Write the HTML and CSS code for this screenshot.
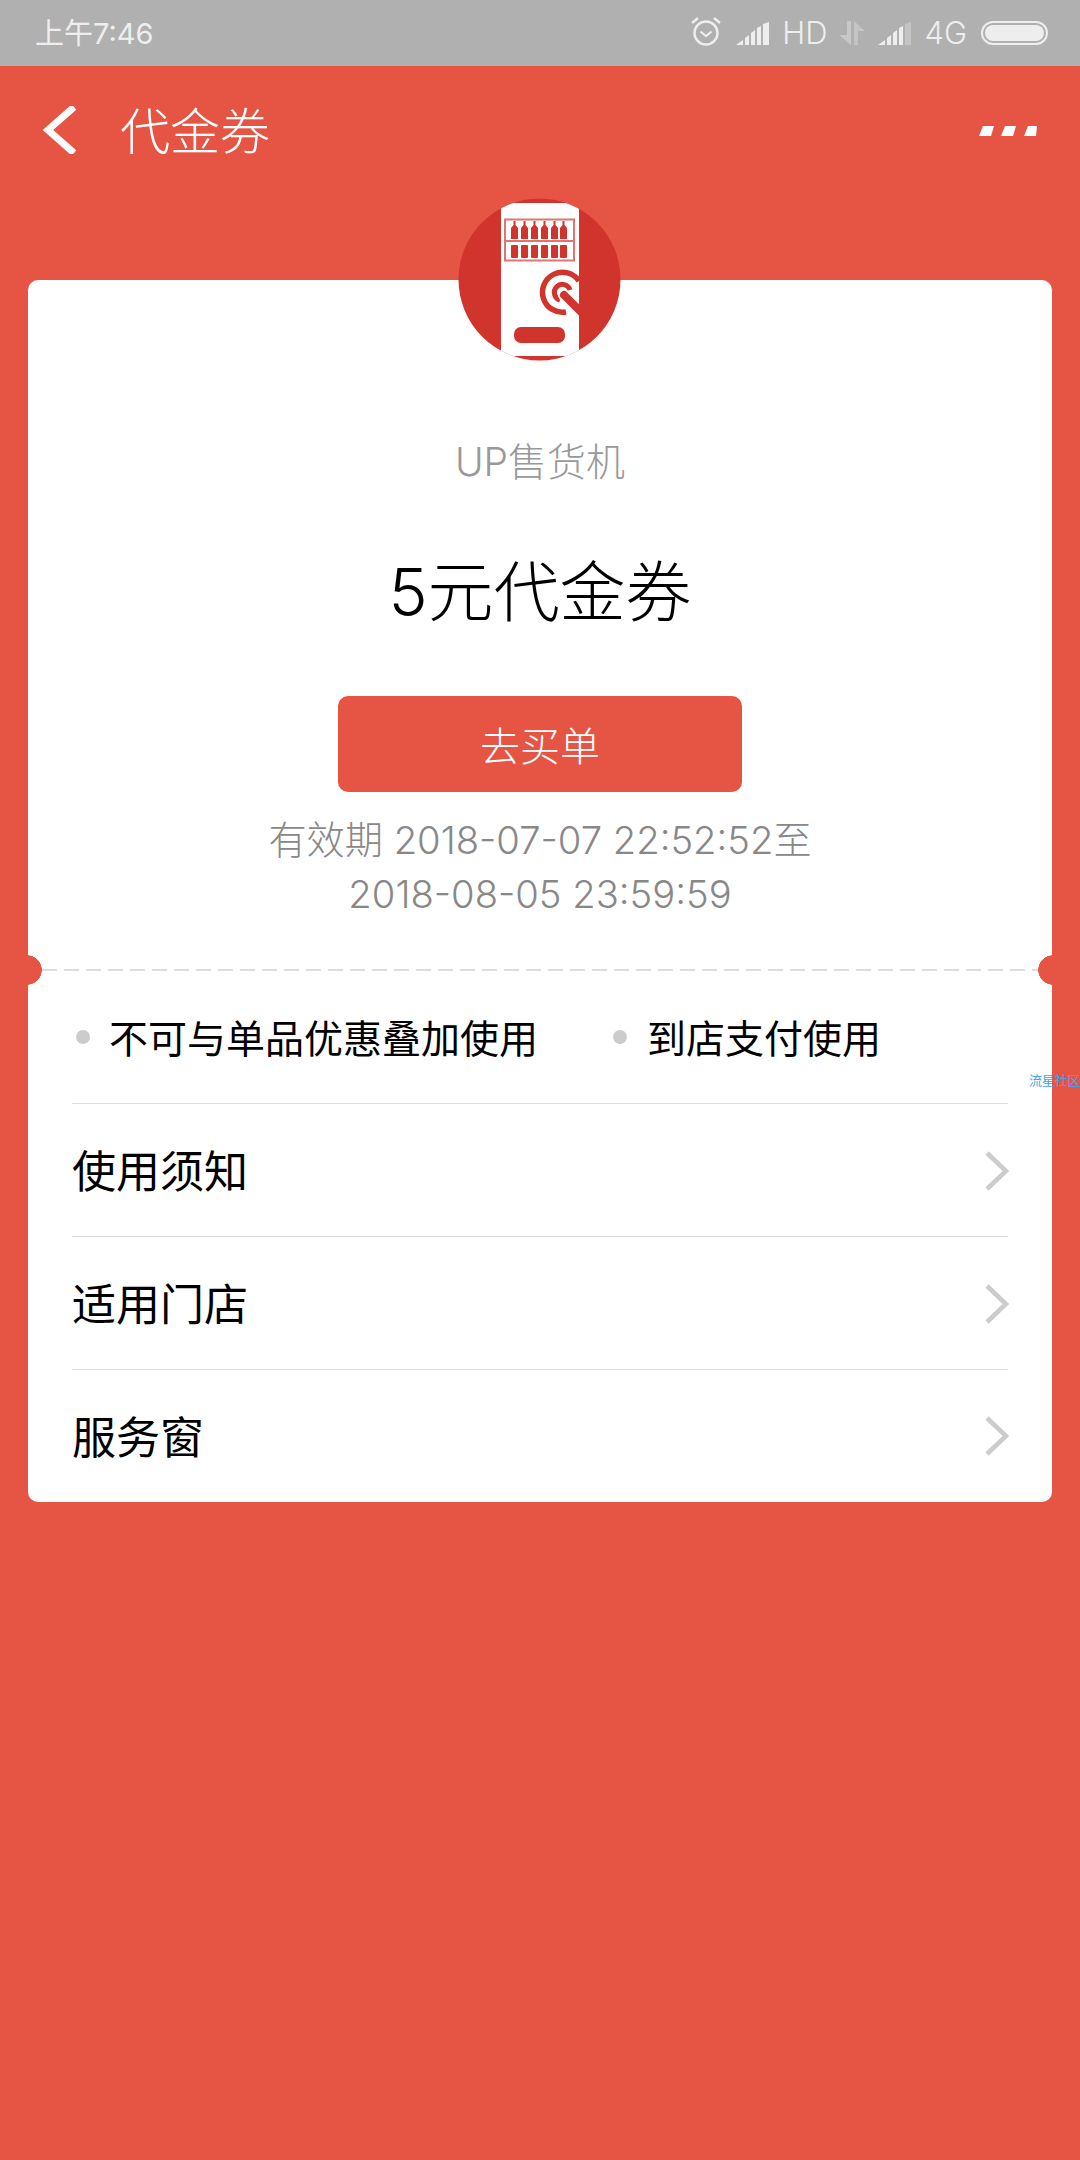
FILE: index.html
```html
<!DOCTYPE html>
<html lang="zh-CN">
<head>
  <meta charset="UTF-8" />
  <meta name="viewport" content="width=device-width, initial-scale=1.0" />
  <title>代金券</title>
  <link rel="stylesheet" href="styles.css">
</head>
<body>

  <div class="statusbar">
    <span class="time">上午7:46</span>
    <div class="status-icons">
      <svg class="ic-alarm" width="30" height="30" viewBox="0 0 30 30">
        <circle cx="15" cy="17" r="11.5" fill="none" stroke="#eee" stroke-width="2.4"/>
        <path d="M9.5 15.5l5.5 4.5 5.5-4.5" fill="none" stroke="#eee" stroke-width="2.2"/>
        <path d="M1 7l6-5M29 7l-6-5" fill="none" stroke="#eee" stroke-width="2.4"/>
      </svg>
      <svg class="ic-signal" width="34" height="23" viewBox="0 0 34 23">
        <path d="M0 23l7-5v5zM9 16l4-3v10H9zM15 11l4-3v15h-4zM21 6l4-2v19h-4zM27 2l6-2v23h-6z" fill="#eee"/>
      </svg>
      <span class="net net-hd">HD</span>
      <svg class="ic-data" width="26" height="24" viewBox="0 0 26 24">
        <path d="M8 0h4v24L0 14h8z" fill="#c8c8c8"/>
        <path d="M15 24h4V10h7L15 0z" fill="#c4c4c4"/>
      </svg>
      <svg class="ic-signal2" width="34" height="23" viewBox="0 0 34 23">
        <path d="M0 23l7-5v5zM9 16l4-3v10H9zM15 11l4-3v15h-4zM21 6l4-2v19h-4z" fill="#eee"/>
        <path d="M27 2l6-2v23h-6z" fill="#c4c4c4"/>
      </svg>
      <span class="net net-4g">4G</span>
      <div class="battery"><div class="battery-fill"></div></div>
    </div>
  </div>

  <div class="header">
    <svg class="back" width="34" height="48" viewBox="0 0 34 48">
      <path d="M32 1L6 24l26 23" fill="none" stroke="#fff" stroke-width="7"/>
    </svg>
    <span class="header-title">代金券</span>
    <svg class="more" width="58" height="10" viewBox="0 0 58 10">
      <path d="M4 0h11l-3 10H0zM26 0h11l-3 10H22zM49 0h9l-1 10H45z" fill="#fff"/>
    </svg>
  </div>

  <div class="card">
    <div class="coupon-top">
      <svg class="logo" width="163" height="163" viewBox="0 0 163 163">
        <defs>
          <clipPath id="logoClip"><circle cx="81.5" cy="81.5" r="81"/></clipPath>
          <clipPath id="panelClip"><rect x="43" y="0" width="78" height="163"/></clipPath>
        </defs>
        <circle cx="81.5" cy="81.5" r="81" fill="#d0342c"/>
        <g clip-path="url(#logoClip)">
          <rect x="43" y="5" width="78" height="153" fill="#fff"/>
          <rect x="47" y="21.5" width="69" height="41" fill="none" stroke="#e0746e" stroke-width="2"/>
          <path d="M47 43h69" stroke="#e0746e" stroke-width="2"/>
          <g fill="#d0342c">
            <path d="M53 41V30l2.500-3v-4h2v4l2.500 3v11zM63 41V30l2.500-3v-4h2v4l2.500 3v11zM73 41V30l2.500-3v-4h2v4l2.500 3v11zM83 41V30l2.500-3v-4h2v4l2.500 3v11zM93 41V30l2.500-3v-4h2v4l2.500 3v11zM102 41V30l2.500-3v-4h2v4l2.500 3v11z"/>
            <rect x="53" y="47" width="7" height="13" rx="1"/>
            <rect x="63" y="47" width="7" height="13" rx="1"/>
            <rect x="73" y="47" width="7" height="13" rx="1"/>
            <rect x="83" y="47" width="7" height="13" rx="1"/>
            <rect x="93" y="47" width="7" height="13" rx="1"/>
            <rect x="102" y="47" width="7" height="13" rx="1"/>
            <rect x="56" y="129" width="51" height="16" rx="7"/>
          </g>
          <g clip-path="url(#panelClip)" fill="none" stroke="#d0342c" stroke-linecap="round">
            <path d="M108 114A20 20 0 1 1 121 83" stroke-width="5.5" stroke-linecap="butt"/>
            <path d="M102 102A8 8 0 1 1 112 92" stroke-width="5" stroke-linecap="butt"/>
            <path d="M106 97l17 17" stroke="#fff" stroke-width="12"/>
            <path d="M106 97l17 17" stroke-width="8"/>
          </g>
        </g>
      </svg>
      <p class="shop">UP售货机</p>
      <h1 class="coupon-name">5元代金券</h1>
      <button class="pay-btn" type="button">去买单</button>
      <p class="valid">有效期 2018-07-07 22:52:52至<br>2018-08-05 23:59:59</p>
    </div>

    <div class="coupon-bottom">
      <div class="tags">
        <span class="tag tag-first">不可与单品优惠叠加使用</span>
        <span class="tag">到店支付使用</span>
      </div>
      <div class="row">
        <span>使用须知</span>
        <svg class="chevron" width="26" height="42" viewBox="0 0 26 42"><path d="M3 3l19 18L3 39" fill="none" stroke="#ccc" stroke-width="4.5"/></svg>
      </div>
      <div class="row">
        <span>适用门店</span>
        <svg class="chevron" width="26" height="42" viewBox="0 0 26 42"><path d="M3 3l19 18L3 39" fill="none" stroke="#ccc" stroke-width="4.5"/></svg>
      </div>
      <div class="row">
        <span>服务窗</span>
        <svg class="chevron" width="26" height="42" viewBox="0 0 26 42"><path d="M3 3l19 18L3 39" fill="none" stroke="#ccc" stroke-width="4.5"/></svg>
      </div>
    </div>
  </div>

  <span class="watermark">流星社区</span>

</body>
</html>
```

FILE: styles.css
```css
* { box-sizing: border-box; }
html, body { margin: 0; padding: 0; }
body { position: relative; width: 1080px; height: 2160px; overflow: hidden; background: #e65444; font-family: Inter, "Noto Sans CJK SC", sans-serif; font-weight: 300; }

.statusbar { height: 66px; background: #b0b0b0; color: #eee; display: flex; justify-content: space-between; align-items: center; padding: 0 32px 0 35px; }
.time { font-size: 29px; line-height: 34px; font-weight: 400; margin-top: 2px; }
.status-icons { display: flex; align-items: center; }
.net { font-size: 31px; font-weight: 300; line-height: 34px; }
.ic-alarm { margin-top: -4px; }
.ic-signal { margin-left: 15px; }
.net-hd { margin-left: 12px; }
.ic-data { margin-left: 12px; }
.ic-signal2 { margin-left: 13px; }
.net-4g { margin-left: 12px; }
.battery { width: 67px; height: 24px; margin-left: 14px; padding: 2px; border: 2px solid #eee; border-radius: 12px; }
.battery-fill { height: 100%; background: #eee; border-radius: 8px; }

.header { height: 128px; display: flex; align-items: center; padding: 0 43px 0 42px; color: #fff; }
.back { flex: none; }
.header-title { font-size: 50px; line-height: 60px; margin: 4px 0 0 44px; flex: 1; }
.more { margin-top: 2px; }

.card { position: relative; width: 1024px; height: 1222px; margin: 86px 0 0 28px; background: #fff; border-radius: 10px; }

.coupon-top { position: relative; height: 691px; display: flex; flex-direction: column; align-items: center; }
.coupon-top::after { content: ""; position: absolute; left: 14px; right: 14px; bottom: 0; height: 2px; background: repeating-linear-gradient(to right, #ddd 0 15px, transparent 15px 22px); }
.coupon-top::before { content: ""; position: absolute; left: -16px; right: -16px; bottom: -14px; height: 30px; background: radial-gradient(circle 15px at 15px 15px, #e65444 14.5px, transparent 15px), radial-gradient(circle 15px at calc(100% - 15px) 15px, #e65444 14.5px, transparent 15px); }

.logo { display: block; flex: none; margin: -82px 2px 0 0; }
.shop { margin: 76px 0 0; font-size: 39px; line-height: 50px; color: #999; }
.coupon-name { margin: 60px 0 0; font-size: 66px; line-height: 90px; font-weight: 300; color: #000; }
.pay-btn { width: 404px; height: 96px; margin-top: 59px; flex: none; border: none; border-radius: 10px; background: #e65444; color: #fff; font: inherit; font-size: 40px; }
.valid { margin: 21px 0 0; font-size: 38.2px; line-height: 54px; color: #888; text-align: center; }

.coupon-bottom { padding: 0 44px; }
.tags { height: 132px; padding-bottom: 2px; display: flex; align-items: center; font-size: 39px; font-weight: 400; color: #000; }
.tag { display: flex; align-items: center; }
.tag::before { content: ""; width: 14px; height: 14px; margin: 2px 20px 0 4px; border-radius: 50%; background: #ccc; }
.tag-first { width: 537px; }
.tag-first::before { margin-right: 19px; }

.row { height: 133px; padding-bottom: 2px; display: flex; justify-content: space-between; align-items: center; border-top: 1px solid #ddd; font-size: 44px; font-weight: 400; color: #000; }
.row:last-child { height: 132px; }
.chevron { flex: none; margin: 3px -2px 0 0; }

.watermark { position: absolute; left: 1029px; top: 1073px; font-size: 13px; line-height: 15px; letter-spacing: -0.2px; font-weight: 400; color: #3fa4f0; white-space: nowrap; }
```
